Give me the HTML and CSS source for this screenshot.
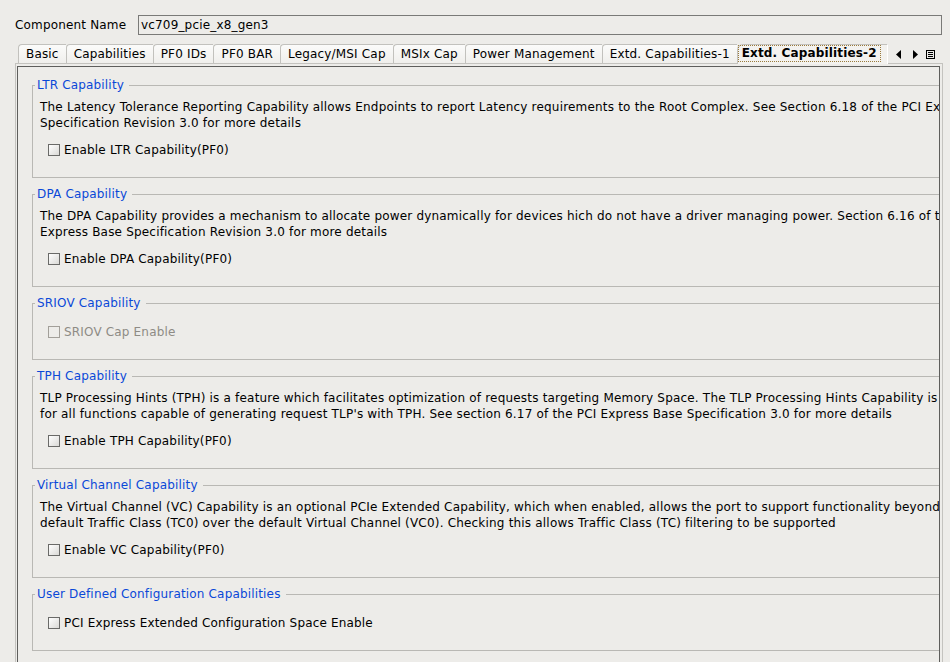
FILE: index.html
```html
<!DOCTYPE html>
<html>
<head>
<meta charset="utf-8">
<link rel="stylesheet" href="styles.css">
</head>
<body>
<div class="toprow">
  <span class="toplabel">Component Name</span>
  <div class="field">vc709_pcie_x8_gen3</div>
</div>
<div class="tabstrip">
  <div class="tab">Basic</div>
  <div class="tab">Capabilities</div>
  <div class="tab">PF0 IDs</div>
  <div class="tab">PF0 BAR</div>
  <div class="tab">Legacy/MSI Cap</div>
  <div class="tab">MSIx Cap</div>
  <div class="tab">Power Management</div>
  <div class="tab">Extd. Capabilities-1</div>
  <div class="tab selected"><span class="focus">Extd. Capabilities-2</span></div>
  <div class="tabctl">
    <svg class="arrow" width="5" height="9" viewBox="0 0 5 9"><polygon points="5,0 0,4.5 5,9" fill="#000"/></svg>
    <svg class="arrow right" width="5" height="9" viewBox="0 0 5 9"><polygon points="0,0 5,4.5 0,9" fill="#000"/></svg>
    <svg class="menu" width="9" height="9" viewBox="0 0 9 9"><rect x="0.5" y="0.5" width="8" height="8" fill="none" stroke="#000"/><line x1="2" y1="2.5" x2="7" y2="2.5" stroke="#000"/><line x1="2" y1="4.5" x2="7" y2="4.5" stroke="#000"/><line x1="2" y1="6.5" x2="7" y2="6.5" stroke="#000"/></svg>
  </div>
</div>
<div class="panel">
  <div class="inner">
    <fieldset class="group">
      <legend>LTR Capability</legend>
      <div class="desc">The Latency Tolerance Reporting Capability allows Endpoints to report Latency requirements to the Root Complex. See Section 6.18 of the PCI Express Base<br>Specification Revision 3.0 for more details</div>
      <label class="row"><span class="cb"></span>Enable LTR Capability(PF0)</label>
    </fieldset>
    <fieldset class="group">
      <legend>DPA Capability</legend>
      <div class="desc">The DPA Capability provides a mechanism to allocate power dynamically for devices hich do not have a driver managing power. Section 6.16 of the PCI<br>Express Base Specification Revision 3.0 for more details</div>
      <label class="row"><span class="cb"></span>Enable DPA Capability(PF0)</label>
    </fieldset>
    <fieldset class="group">
      <legend>SRIOV Capability</legend>
      <label class="row disabled"><span class="cb"></span>SRIOV Cap Enable</label>
    </fieldset>
    <fieldset class="group">
      <legend>TPH Capability</legend>
      <div class="desc">TLP Processing Hints (TPH) is a feature which facilitates optimization of requests targeting Memory Space. The TLP Processing Hints Capability is required<br>for all functions capable of generating request TLP's with TPH. See section 6.17 of the PCI Express Base Specification 3.0 for more details</div>
      <label class="row"><span class="cb"></span>Enable TPH Capability(PF0)</label>
    </fieldset>
    <fieldset class="group">
      <legend>Virtual Channel Capability</legend>
      <div class="desc">The Virtual Channel (VC) Capability is an optional PCIe Extended Capability, which when enabled, allows the port to support functionality beyond the<br>default Traffic Class (TC0) over the default Virtual Channel (VC0). Checking this allows Traffic Class (TC) filtering to be supported</div>
      <label class="row"><span class="cb"></span>Enable VC Capability(PF0)</label>
    </fieldset>
    <fieldset class="group">
      <legend>User Defined Configuration Capabilities</legend>
      <label class="row"><span class="cb"></span>PCI Express Extended Configuration Space Enable</label>
    </fieldset>
  </div>
</div>
</body>
</html>
```
FILE: styles.css
```css
html, body {
  margin: 0;
  padding: 0;
  width: 950px;
  height: 662px;
  overflow: hidden;
}
body {
  background: #edece9;
  font-family: "DejaVu Sans", sans-serif;
  font-size: 12px;
  letter-spacing: 0.17px;
  color: #000;
  padding-top: 15px;
  box-sizing: border-box;
}
.toprow {
  display: flex;
  align-items: center;
  height: 20px;
  padding-left: 15px;
  padding-right: 8px;
}
.toplabel {
  width: 123px;
  flex-shrink: 0;
  line-height: 20px;
}
.field {
  flex: 1;
  height: 20px;
  box-sizing: border-box;
  border: 1px solid #7a7a78;
  padding-left: 2px;
  line-height: 18px;
  background: #edece9;
}
.tabstrip {
  display: flex;
  align-items: flex-start;
  height: 19px;
  margin-top: 9px;
  margin-left: 18px;
  position: relative;
  z-index: 2;
}
.tab {
  height: 19px;
  box-sizing: border-box;
  padding: 0 7px;
  border-top: 1px solid #c2c1bd;
  border-left: 1px solid #c2c1bd;
  border-top-left-radius: 4px;
  line-height: 18px;
  white-space: nowrap;
  background: linear-gradient(#fbfbfa, #f0efec);
}
.tab.selected {
  height: 20px;
  padding: 0 6px 0 0;
  border-right: 1px solid #ffffff;
  border-top-left-radius: 6px;
  background: #f3f2ef;
  font-weight: bold;
  letter-spacing: 0.15px;
}
.focus {
  display: block;
  height: 17px;
  box-sizing: border-box;
  border: 1px dotted #9a7a3a;
  padding: 0 3px;
  line-height: 15px;
}
.tabctl {
  display: flex;
  align-items: center;
  height: 19px;
  padding-left: 8px;
}
.arrow {
  display: block;
  margin-top: 1px;
}
.arrow.right {
  margin-left: 12px;
}
.menu {
  display: block;
  margin-left: 8px;
  margin-top: 1px;
}
.panel {
  margin-left: 15px;
  width: 928px;
  height: 700px;
  box-sizing: border-box;
  border: 1px solid #c4c3bf;
  padding: 2px 2px 0 1px;
}
.inner {
  height: 690px;
  box-sizing: border-box;
  border: 1px solid #5e5e5c;
  overflow: hidden;
  padding: 10px 0 0 14px;
}
.group {
  width: 1200px;
  margin: 0;
  padding: 0;
  border: 1px solid #b9b8b4;
  min-width: 0;
  box-sizing: border-box;
}
.group + .group {
  margin-top: 8px;
}
legend {
  margin-left: 2px;
  padding: 0 5px 0 2px;
  line-height: 17px;
  color: #0a48d8;
}
.desc {
  margin-top: 5px;
  padding-left: 7px;
  line-height: 16px;
  letter-spacing: 0.19px;
  white-space: nowrap;
}
.row {
  display: flex;
  align-items: center;
  height: 20px;
  margin-top: 9px;
  margin-bottom: 17px;
  padding-left: 15px;
  white-space: nowrap;
}
legend + .row {
  margin-top: 10px;
}
.cb {
  width: 12px;
  height: 12px;
  box-sizing: border-box;
  border: 1px solid #6a6a68;
  background: linear-gradient(135deg, #ffffff, #dad9d6);
  margin-right: 4px;
  flex-shrink: 0;
}
.row.disabled {
  color: #8e8b85;
}
.row.disabled .cb {
  border-color: #a29f99;
  background: #edece9;
}
```
